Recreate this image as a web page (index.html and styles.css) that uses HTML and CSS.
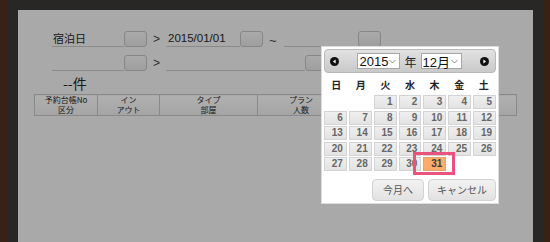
FILE: index.html
```html
<!DOCTYPE html>
<html lang="ja">
<head>
    <meta charset="UTF-8">
    <meta name="viewport" content="width=device-width, initial-scale=1.0">
    <title>予約台帳</title>
    <link rel="stylesheet" href="styles.css">
</head>
<body>
    <div class="frame">
        <div class="panel">
            <div class="search">
                <div class="row">
                    <div class="field w72">宿泊日</div>
                    <div class="pick"></div>
                    <div class="sep">&gt;</div>
                    <div class="field w74 num">2015/01/01</div>
                    <div class="pick"></div>
                    <div class="sep tilde">~</div>
                    <div class="field w74"></div>
                    <div class="pick"></div>
                </div>
                <div class="row">
                    <div class="field w72"></div>
                    <div class="pick"></div>
                    <div class="sep">&gt;</div>
                    <div class="field w139"></div>
                    <div class="pick"></div>
                </div>
            </div>

            <div class="count">--件</div>

            <table class="list">
                <tr>
                    <th class="c1"><span>予約台帳No</span><span>区分</span></th>
                    <th class="c2"><span>イン</span><span>アウト</span></th>
                    <th class="c3"><span>タイプ</span><span>部屋</span></th>
                    <th class="c4"><span>プラン</span><span>人数</span></th>
                    <th></th>
                </tr>
            </table>
        </div>
    </div>

    <div class="overlay"></div>

    <div class="datepicker">
        <div class="dp-header">
            <svg class="dp-nav" width="9" height="9" viewBox="0 0 9 9">
                <circle cx="4.5" cy="4.5" r="4.5" fill="#111"/>
                <path d="M5.6 2.6 L3 4.5 L5.6 6.4 Z" fill="#fff"/>
            </svg>
            <div class="dp-title">
                <div class="dp-select year">
                    <span>2015</span>
                    <svg width="7" height="5" viewBox="0 0 7 5"><path d="M0.5 1 L3.5 4 L6.5 1" fill="none" stroke="#888" stroke-width="1"/></svg>
                </div>
                <span class="dp-label">年</span>
                <div class="dp-select month">
                    <span>12月</span>
                    <svg width="7" height="5" viewBox="0 0 7 5"><path d="M0.5 1 L3.5 4 L6.5 1" fill="none" stroke="#888" stroke-width="1"/></svg>
                </div>
            </div>
            <svg class="dp-nav" width="9" height="9" viewBox="0 0 9 9">
                <circle cx="4.5" cy="4.5" r="4.5" fill="#111"/>
                <path d="M3.4 2.6 L6 4.5 L3.4 6.4 Z" fill="#fff"/>
            </svg>
        </div>

        <div class="dp-week">
            <span>日</span><span>月</span><span>火</span><span>水</span><span>木</span><span>金</span><span>土</span>
        </div>

        <div class="dp-days" id="days"></div>

        <div class="dp-buttons">
            <div class="dp-btn today">今月へ</div>
            <div class="dp-btn cancel">キャンセル</div>
        </div>
    </div>

    <div class="mark"></div>

    <script>
        // 2015年12月 : 1日は火曜日
        const days = document.getElementById('days');
        const firstDay = 2;
        for (let i = 0; i < firstDay; i++) {
            days.appendChild(document.createElement('span'));
        }
        for (let d = 1; d <= 31; d++) {
            let cell = document.createElement('a');
            cell.className = 'dp-day';
            if (d === 31) cell.className += ' active';
            cell.innerText = d;
            days.appendChild(cell);
        }
    </script>
</body>
</html>
```

FILE: styles.css
```css
body {
    margin: 0;
    height: 100vh;
    background: #54301f;
    font-family: "Liberation Sans", "Noto Sans CJK JP", sans-serif;
    overflow: hidden;
}

.frame {
    height: 100%;
    margin: 0 7px;
    padding: 10px 10px 0 11px;
    box-sizing: border-box;
    background: #3a3836;
}

.panel {
    height: 100%;
    box-sizing: border-box;
    padding: 21px 0 0 16px;
    background: #f2f2f2;
    color: #262626;
}

.search {
    margin-left: 18px;
    display: flex;
    flex-direction: column;
    gap: 8px;
}

.row {
    display: flex;
    align-items: flex-end;
    height: 16px;
}

.field {
    height: 16px;
    box-sizing: border-box;
    padding-left: 1px;
    border-bottom: 1px solid #c6c6c6;
    font-family: "Noto Sans CJK JP", sans-serif;
    font-size: 11px;
    line-height: 15px;
}

.field.num {
    padding-left: 2px;
    font-family: "Liberation Sans", sans-serif;
    font-size: 11.5px;
}

.w72 { width: 72px; }
.w74 { width: 74px; }
.w139 { width: 139px; }

.pick {
    width: 23px;
    height: 16px;
    box-sizing: border-box;
    border: 1px solid #c0c0c0;
    border-radius: 3px;
    background: linear-gradient(#f3f3f3, #e3e3e3);
}

.sep {
    width: 19px;
    box-sizing: border-box;
    padding-left: 6px;
    font-size: 12px;
    line-height: 16px;
    color: #444;
}

.sep.tilde {
    width: 21px;
    padding-left: 6px;
    font-size: 13px;
    line-height: 12px;
}

.count {
    margin: 2px 0 0 29px;
    font-family: "Noto Sans CJK JP", sans-serif;
    font-size: 14px;
    line-height: 20px;
}

.list {
    width: 483px;
    margin-top: 1px;
    border-collapse: collapse;
    table-layout: fixed;
    font-family: "Noto Sans CJK JP", sans-serif;
    font-size: 8px;
}

.list th {
    height: 20px;
    padding: 0;
    border: 1px solid #c4c4c4;
    background: linear-gradient(#fcfcfc, #ececec);
    font-weight: normal;
    color: #2a2a2a;
}

.list th span {
    display: block;
    height: 10px;
    line-height: 10px;
}

.list .c1 { width: 62px; }
.list .c2 { width: 61px; }
.list .c3 { width: 97px; }
.list .c4 { width: 86px; }

.overlay {
    position: fixed;
    top: 0;
    left: 0;
    width: 100%;
    height: 100%;
    background: rgba(0, 0, 0, 0.3);
}

/* datepicker popup */
.datepicker {
    position: absolute;
    left: 321px;
    top: 46px;
    width: 178px;
    box-sizing: border-box;
    padding: 2px;
    border: 1px solid #dcdcdc;
    background: #fff;
    color: #222;
}

.dp-header {
    height: 24px;
    box-sizing: border-box;
    padding: 0 6px 0 5px;
    display: flex;
    align-items: center;
    justify-content: space-between;
    border: 1px solid #b8b8b8;
    border-radius: 4px;
    background: linear-gradient(#e2e2e2, #c9c9c9);
}

.dp-title {
    display: flex;
    align-items: center;
    gap: 4px;
}

.dp-select {
    height: 16px;
    box-sizing: border-box;
    padding: 0 3px 0 1px;
    display: flex;
    align-items: center;
    justify-content: space-between;
    border: 1px solid #a6a6a6;
    background: #fff;
    font-size: 13px;
    color: #111;
}

.dp-select.year { width: 43px; }
.dp-select.month { width: 41px; }

.dp-label {
    font-family: "Noto Sans CJK JP", sans-serif;
    font-size: 12px;
}

.dp-week {
    height: 22px;
    display: grid;
    grid-template-columns: repeat(7, 1fr);
    align-items: center;
    text-align: center;
    font-family: "Noto Sans CJK JP", sans-serif;
    font-size: 10px;
    font-weight: bold;
}

.dp-days {
    display: grid;
    grid-template-columns: repeat(7, 1fr);
    grid-auto-rows: 14px;
    gap: 1.5px 2px;
}

.dp-day {
    box-sizing: border-box;
    padding-right: 3px;
    border: 1px solid #d3d3d3;
    background: linear-gradient(#efefef, #e3e3e3);
    text-align: right;
    font-size: 10px;
    font-weight: bold;
    line-height: 12px;
    color: #666;
}

.dp-day.active {
    border-color: #e8a070;
    background: #fdac6b;
    color: #3a3a3a;
}

.dp-buttons {
    margin-top: 8px;
    display: flex;
    justify-content: flex-end;
    gap: 4px;
}

.dp-btn {
    height: 22px;
    box-sizing: border-box;
    border: 1px solid #d3d3d3;
    border-radius: 4px;
    background: linear-gradient(#f2f2f2, #e2e2e2);
    font-family: "Noto Sans CJK JP", sans-serif;
    font-size: 10px;
    line-height: 20px;
    text-align: center;
    color: #555;
}

.dp-btn.today { width: 52px; }
.dp-btn.cancel { width: 68px; }

.mark {
    position: absolute;
    left: 413px;
    top: 152px;
    width: 42px;
    height: 23px;
    box-sizing: border-box;
    border: 3px solid #ea537e;
}
```
